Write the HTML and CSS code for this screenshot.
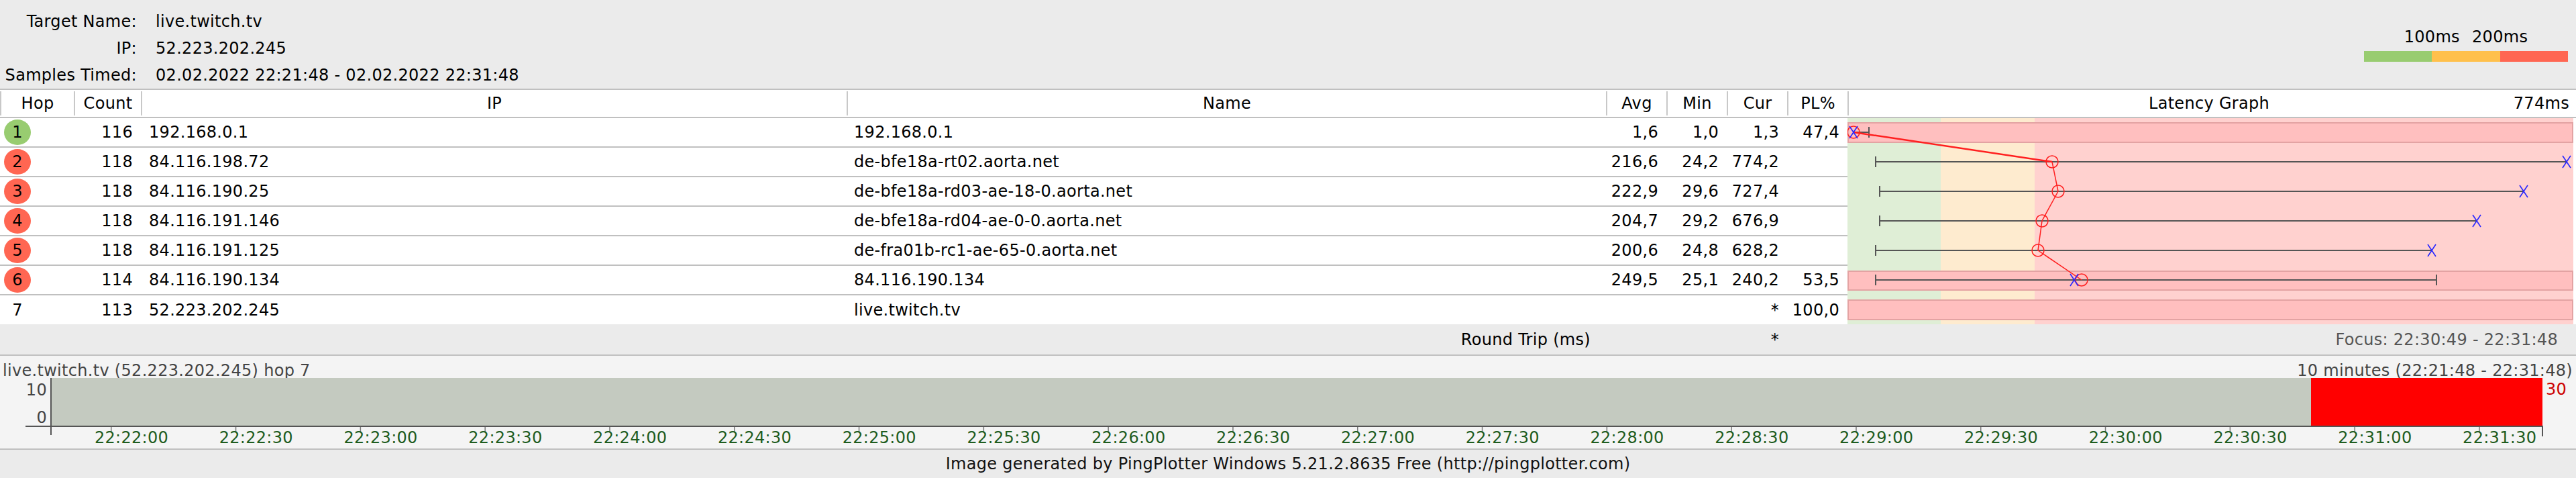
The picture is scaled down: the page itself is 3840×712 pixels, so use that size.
FILE: index.html
```html
<!DOCTYPE html>
<html lang="en">
<head>
<meta charset="utf-8">
<title>PingPlotter - live.twitch.tv</title>
<link rel="stylesheet" href="styles.css">
</head>
<body>
<div class="page">
  <header class="summary">
    <dl class="target">
      <dt>Target Name:</dt><dd>live.twitch.tv</dd>
      <dt>IP:</dt><dd>52.223.202.245</dd>
      <dt>Samples Timed:</dt><dd>02.02.2022 22:21:48 - 02.02.2022 22:31:48</dd>
    </dl>
    <div class="legend">
      <div class="legend-labels"><span></span><span>100ms</span><span>200ms</span><span></span></div>
      <div class="legend-bar"><i class="good"></i><i class="warn"></i><i class="bad"></i></div>
    </div>
  </header>

  <section class="trace">
    <div class="thead cols">
      <div class="th">Hop</div>
      <div class="th">Count</div>
      <div class="th">IP</div>
      <div class="th">Name</div>
      <div class="th">Avg</div>
      <div class="th">Min</div>
      <div class="th">Cur</div>
      <div class="th">PL%</div>
      <div class="th graph-head"><span></span><span>Latency Graph</span><span class="scale">774ms</span></div>
    </div>

    <div class="tbody">
      <div class="rows">
        <div class="row cols8">
          <div class="hop"><span class="badge ok">1</span></div>
          <div class="num">116</div><div class="ip">192.168.0.1</div><div class="name">192.168.0.1</div>
          <div class="num">1,6</div><div class="num">1,0</div><div class="num">1,3</div><div class="num">47,4</div>
        </div>
        <div class="row cols8">
          <div class="hop"><span class="badge bad">2</span></div>
          <div class="num">118</div><div class="ip">84.116.198.72</div><div class="name">de-bfe18a-rt02.aorta.net</div>
          <div class="num">216,6</div><div class="num">24,2</div><div class="num">774,2</div><div class="num"></div>
        </div>
        <div class="row cols8">
          <div class="hop"><span class="badge bad">3</span></div>
          <div class="num">118</div><div class="ip">84.116.190.25</div><div class="name">de-bfe18a-rd03-ae-18-0.aorta.net</div>
          <div class="num">222,9</div><div class="num">29,6</div><div class="num">727,4</div><div class="num"></div>
        </div>
        <div class="row cols8">
          <div class="hop"><span class="badge bad">4</span></div>
          <div class="num">118</div><div class="ip">84.116.191.146</div><div class="name">de-bfe18a-rd04-ae-0-0.aorta.net</div>
          <div class="num">204,7</div><div class="num">29,2</div><div class="num">676,9</div><div class="num"></div>
        </div>
        <div class="row cols8">
          <div class="hop"><span class="badge bad">5</span></div>
          <div class="num">118</div><div class="ip">84.116.191.125</div><div class="name">de-fra01b-rc1-ae-65-0.aorta.net</div>
          <div class="num">200,6</div><div class="num">24,8</div><div class="num">628,2</div><div class="num"></div>
        </div>
        <div class="row cols8">
          <div class="hop"><span class="badge bad">6</span></div>
          <div class="num">114</div><div class="ip">84.116.190.134</div><div class="name">84.116.190.134</div>
          <div class="num">249,5</div><div class="num">25,1</div><div class="num">240,2</div><div class="num">53,5</div>
        </div>
        <div class="row cols8">
          <div class="hop"><span class="badge">7</span></div>
          <div class="num">113</div><div class="ip">52.223.202.245</div><div class="name">live.twitch.tv</div>
          <div class="num"></div><div class="num"></div><div class="num">*</div><div class="num">100,0</div>
        </div>
      </div>

      <div class="graph">
        <svg class="latency" width="1082" height="307" viewBox="0 0 1082 307">
          <rect class="zone-good" x="0" y="0" width="139" height="307"/>
          <rect class="zone-warn" x="139" y="0" width="140" height="307"/>
          <rect class="zone-bad" x="279" y="0" width="803" height="307"/>

          <rect class="loss" x="1" y="7" width="1080" height="29"/>
          <rect class="loss" x="1" y="228" width="1080" height="28"/>
          <rect class="loss" x="1" y="271" width="1080" height="29"/>

          <g class="range">
            <path d="M9 21H32M32 13V29"/>
            <path d="M42 65H1072M42 57V73"/>
            <path d="M48 109H1008M48 101V117"/>
            <path d="M48 153H938M48 145V161"/>
            <path d="M42 197H871M42 189V205"/>
            <path d="M42 241H878M42 233V249M878 233V249"/>
          </g>

          <g class="avg">
            <path class="first" d="M9 21L305 65"/>
            <path d="M305 65L314 109L290 153L284 197L349 241"/>
            <circle cx="9" cy="21" r="9"/>
            <circle cx="305" cy="65" r="9"/>
            <circle cx="314" cy="109" r="9"/>
            <circle cx="290" cy="153" r="9"/>
            <circle cx="284" cy="197" r="9"/>
            <circle cx="349" cy="241" r="9"/>
          </g>

          <g class="cur">
            <path d="M3 12L15 30M15 12L3 30"/>
            <path d="M1066 56L1078 74M1078 56L1066 74"/>
            <path d="M1002 100L1014 118M1014 100L1002 118"/>
            <path d="M932 144L944 162M944 144L932 162"/>
            <path d="M865 188L877 206M877 188L865 206"/>
            <path d="M332 232L344 250M344 232L332 250"/>
          </g>
        </svg>
      </div>
    </div>

    <div class="tfoot cols">
      <div></div><div></div><div></div>
      <div class="num wide">Round Trip (ms)</div>
      <div></div><div></div>
      <div class="num">*</div>
      <div></div>
      <div class="num focus">Focus: 22:30:49 - 22:31:48</div>
    </div>
  </section>

  <section class="history">
    <div class="history-head">
      <span>live.twitch.tv (52.223.202.245) hop 7</span>
      <span>10 minutes (22:21:48 - 22:31:48)</span>
    </div>
    <svg class="history-plot" width="3840" height="105" viewBox="0 0 3840 105">
      <rect class="plot-fill" x="77" y="0" width="3368" height="71"/>
      <rect class="plot-focus" x="3445" y="0" width="345" height="71"/>
      <rect class="axis" x="38" y="71" width="3752" height="2"/>
      <rect class="axis" x="75" y="0" width="2" height="85"/>
      <rect class="axis" x="3789" y="71" width="2" height="16"/>
      <g class="ticks" id="ticks"></g>
      <g class="tick-labels" id="tick-labels"></g>
      <text class="y-label" x="70" y="26" text-anchor="end">10</text>
      <text class="y-label" x="70" y="67" text-anchor="end">0</text>
      <text class="y-max" x="3795" y="25">30</text>
    </svg>
  </section>

  <footer class="credit">Image generated by PingPlotter Windows 5.21.2.8635 Free (http://pingplotter.com)</footer>
</div>
<script src="app.js"></script>
</body>
</html>
```

FILE: app.js
```js
// Time axis of the history chart: a tick every 30 s from 22:22:00 to 22:31:30.
(function () {
  var NS = "http://www.w3.org/2000/svg";
  var ticks = document.getElementById("ticks");
  var labels = document.getElementById("tick-labels");
  var start = 22 * 3600 + 22 * 60;
  var step = 185.8;
  function pad(n) { return (n < 10 ? "0" : "") + n; }
  for (var i = 0; i < 20; i++) {
    var x = 165 + i * step;
    var t = start + i * 30;
    var r = document.createElementNS(NS, "rect");
    r.setAttribute("x", x.toFixed(1));
    r.setAttribute("y", "73");
    r.setAttribute("width", "1.5");
    r.setAttribute("height", "8");
    ticks.appendChild(r);
    var s = document.createElementNS(NS, "text");
    s.setAttribute("x", (x + 31).toFixed(1));
    s.setAttribute("y", "97");
    s.setAttribute("text-anchor", "middle");
    s.textContent = pad(Math.floor(t / 3600)) + ":" + pad(Math.floor(t / 60) % 60) + ":" + pad(t % 60);
    labels.appendChild(s);
  }
})();
```

FILE: styles.css
```css
* { box-sizing: border-box; }

html, body {
  margin: 0;
  padding: 0;
  background: #ebebeb;
}

body {
  width: 3840px;
  height: 712px;
  overflow: hidden;
  font-family: Verdana, "DejaVu Sans", sans-serif;
  font-size: 24px;
  letter-spacing: 0.3px;
  color: #000;
}

/* ---------- summary header ---------- */
.summary {
  height: 132px;
  display: flex;
  justify-content: space-between;
}

.target {
  margin: 0;
  padding-top: 12px;
  display: grid;
  grid-template-columns: 204px auto;
  column-gap: 28px;
  line-height: 40px;
  align-content: start;
}
.target dt { text-align: right; white-space: nowrap; }
.target dd { margin: 0; white-space: nowrap; }

.legend {
  padding-top: 41px;
  padding-right: 12px;
  width: 316px;
}
.legend-labels {
  display: grid;
  grid-template-columns: 50.67px 101.33px 101.33px 50.67px;
  line-height: 28px;
  height: 28px;
  text-align: center;
  white-space: nowrap;
  margin-bottom: 7px;
}
.legend-bar {
  display: flex;
  height: 16px;
}
.legend-bar i { flex: 1; }
.legend-bar .good { background: #98cc70; }
.legend-bar .warn { background: #ffc04c; }
.legend-bar .bad  { background: #ff6652; }

/* ---------- hop table ---------- */
.trace {
  border-top: 2px solid #c0c0c0;
  background: #fff;
}

.cols {
  display: grid;
  grid-template-columns: 110px 100px 1052px 1132px 90px 90px 90px 90px 1fr;
}
.cols8 {
  display: grid;
  grid-template-columns: 110px 100px 1052px 1132px 90px 90px 90px 90px;
}

.thead {
  height: 42px;
  padding: 2px 0;
  border-bottom: 2px solid #c0c0c0;
  background: #fff;
}
.th {
  border-left: 2px solid #c8c8c8;
  line-height: 36px;
  text-align: center;
  white-space: nowrap;
}
.graph-head {
  display: grid;
  grid-template-columns: 1fr auto 1fr;
  padding-right: 10px;
}
.graph-head .scale { justify-self: end; }

.tbody {
  display: flex;
}
.rows { width: 2754px; }

.row {
  height: 44px;
  border-bottom: 2px solid #c0c0c0;
  align-items: center;
  white-space: nowrap;
}
.row:last-child {
  height: 43px;
  border-bottom: 0;
}

.num {
  text-align: right;
  padding-right: 12px;
}
.ip { padding-left: 12px; }
.name { padding-left: 11px; }

.hop {
  padding-left: 6px;
  display: flex;
}
.badge {
  width: 40px;
  height: 38px;
  border-radius: 50%;
  display: flex;
  align-items: center;
  justify-content: center;
}
.badge.ok  { background: #98cc70; }
.badge.bad { background: #ff6652; }

.graph {
  flex: 1;
  background: #fff;
}
.latency { display: block; }

.zone-good { fill: #dfeed6; }
.zone-warn { fill: #feebcf; }
.zone-bad  { fill: #ffd1cf; }
.loss {
  fill: #ffbfbf;
  stroke: #e3a3a3;
  stroke-width: 2;
}
.range path {
  fill: none;
  stroke: #555;
  stroke-width: 2;
}
.avg path {
  fill: none;
  stroke: #ff1f1f;
  stroke-width: 1.5;
}
.avg path.first { stroke-width: 2.5; }
.avg circle {
  fill: none;
  stroke: #ff1f1f;
  stroke-width: 1.5;
}
.cur path {
  fill: none;
  stroke: #2727ff;
  stroke-width: 1.6;
}

.tfoot {
  height: 45px;
  background: #ebebeb;
  align-items: center;
  white-space: nowrap;
}
.tfoot .wide { padding-right: 23px; }
.tfoot .focus {
  padding-right: 27px;
  color: #555;
}

/* ---------- history chart ---------- */
.history {
  height: 142px;
  background: #f4f4f4;
  border-top: 2px solid #c0c0c0;
  border-bottom: 2px solid #c0c0c0;
}
.history-head {
  display: flex;
  justify-content: space-between;
  padding: 8px 5px 0 4px;
  height: 36px;
  line-height: 28px;
  margin-bottom: -3px;
  color: #444;
  white-space: nowrap;
}
.history-plot {
  display: block;
  font-family: Verdana, "DejaVu Sans", sans-serif;
  font-size: 24px;
  letter-spacing: 0.3px;
}
.plot-fill  { fill: #c4cac0; }
.plot-focus { fill: #ff0000; }
.axis { fill: #555; }
.ticks rect { fill: #7a7a7a; }
.tick-labels text { fill: #1e5c1e; }
.y-label { fill: #444; }
.y-max { fill: #cc0000; }

/* ---------- credit line ---------- */
.credit {
  height: 42px;
  line-height: 42px;
  text-align: center;
  color: #111;
  white-space: nowrap;
}
```
